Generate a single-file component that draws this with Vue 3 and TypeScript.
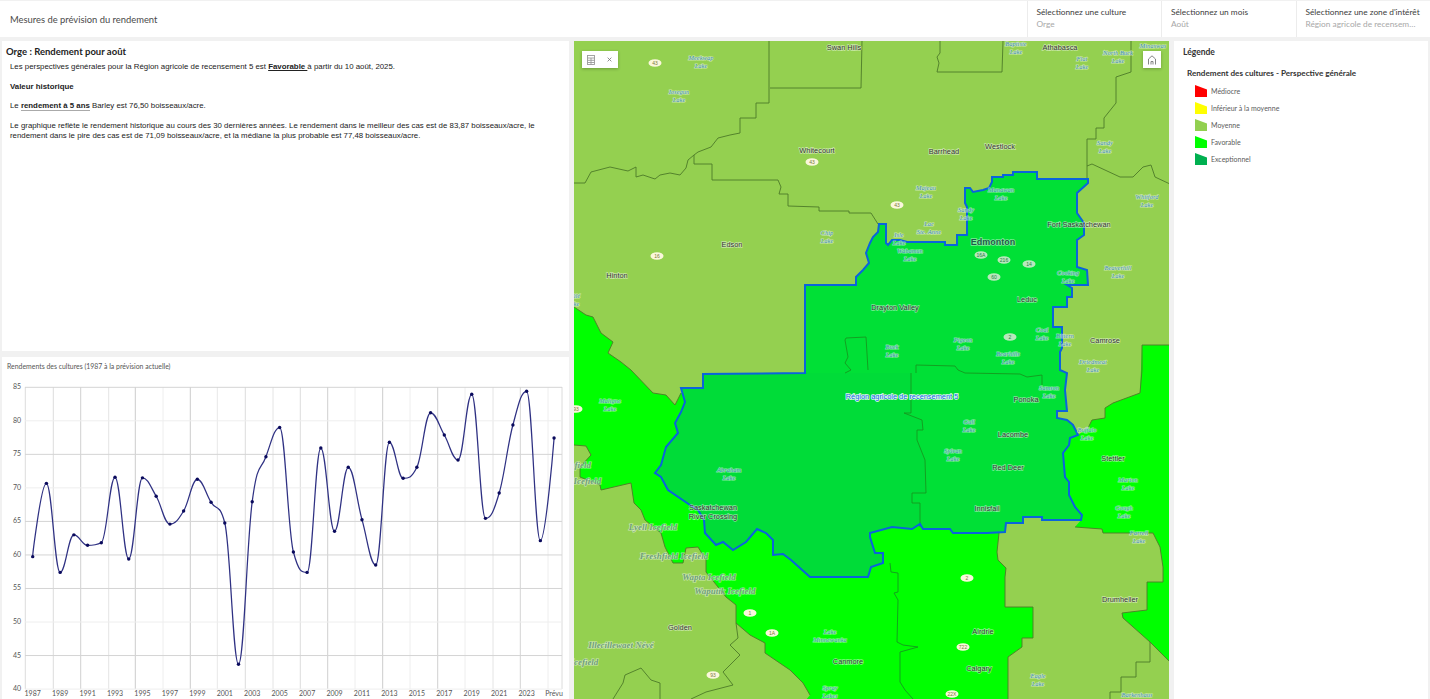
<script setup lang="ts">
import { computed } from 'vue'

const selectors = [
  { label: 'Sélectionnez une culture', value: 'Orge' },
  { label: 'Sélectionnez un mois', value: 'Août' },
  { label: "Sélectionnez une zone d'intérêt", value: 'Région agricole de recensem…' }
]

const legendItems = [
  { label: 'Médiocre', color: '#ff0000' },
  { label: 'Inférieur à la moyenne', color: '#ffff00' },
  { label: 'Moyenne', color: '#92d050' },
  { label: 'Favorable', color: '#00ff00' },
  { label: 'Exceptionnel', color: '#00b050' }
]

const yields = [
  59.75, 70.68, 57.4, 63, 61.44, 61.83, 71.58, 59.4, 71.5, 68.75, 64.6, 66.55, 71.28,
  67.85, 64.76, 43.7, 67.94, 74.65, 79, 60.44, 57.4, 75.95, 63.53, 73.07, 65.26, 58.5,
  76.8, 71.43, 73.07, 81.2, 77.89, 74.16, 83.96, 65.46, 69.24, 79.38, 84.4, 62.13, 77.44
]
const yOf = (v: number) => 30.3 + (85 - v) * 6.706
const xOf = (i: number) => 30.7 + i * 13.72
const points = yields.map((v, i) => ({ x: xOf(i), y: yOf(v) }))

// same spline the chart library draws: control points never overshoot a neighbour
const controls = (i: number) => {
  const p = points[i]
  const a = points[i - 1]
  const b = points[i + 1]
  if (!a || !b) return { lx: p.x, ly: p.y, rx: p.x, ry: p.y }
  const lx = (1.5 * p.x + a.x) / 2.5
  const rx = (1.5 * p.x + b.x) / 2.5
  let ly = (1.5 * p.y + a.y) / 2.5
  let ry = (1.5 * p.y + b.y) / 2.5
  const fix = ((ry - ly) * (rx - p.x)) / (rx - lx) + p.y - ry
  ly += fix
  ry += fix
  if (ly > a.y && ly > p.y) {
    ly = Math.max(a.y, p.y)
    ry = 2 * p.y - ly
  } else if (ly < a.y && ly < p.y) {
    ly = Math.min(a.y, p.y)
    ry = 2 * p.y - ly
  }
  if (ry > b.y && ry > p.y) {
    ry = Math.max(b.y, p.y)
    ly = 2 * p.y - ry
  } else if (ry < b.y && ry < p.y) {
    ry = Math.min(b.y, p.y)
    ly = 2 * p.y - ry
  }
  return { lx, ly, rx, ry }
}

const linePath = computed(() => {
  let d = `M${points[0].x} ${points[0].y}`
  for (let i = 1; i < points.length; i++) {
    const c1 = controls(i - 1)
    const c2 = controls(i)
    d += `C${c1.rx.toFixed(1)} ${c1.ry.toFixed(1)} ${c2.lx.toFixed(1)} ${c2.ly.toFixed(1)} ${points[i].x.toFixed(1)} ${points[i].y.toFixed(1)}`
  }
  return d
})

const hLines = [85, 80, 75, 70, 65, 60, 55, 50, 45, 40].map((v, i) => ({
  v,
  y: yOf(v),
  major: i % 2 === 0 || v === 65 || v === 60
}))
const vLines = [
  { x: 23.3, c: '#dcdcdc' }, { x: 51.3, c: '#dcdcdc' }, { x: 78.7, c: '#d0d0d0' }, { x: 106.7, c: '#e4e4e4' },
  { x: 133.3, c: '#cccccc' }, { x: 161, c: '#eeeeee' }, { x: 188.3, c: '#cccccc' }, { x: 215.3, c: '#e8e8e8' },
  { x: 243.3, c: '#dcdcdc' }, { x: 271, c: '#e4e4e4' }, { x: 298.3, c: '#dcdcdc' }, { x: 325.7, c: '#cfcfcf' },
  { x: 353, c: '#eeeeee' }, { x: 380.7, c: '#cccccc' }, { x: 408, c: '#eeeeee' }, { x: 435.7, c: '#d0d0d0' },
  { x: 463, c: '#eeeeee' }, { x: 491, c: '#e4e4e4' }, { x: 518.3, c: '#d4d4d4' }, { x: 546, c: '#eeeeee' },
  { x: 560, c: '#dcdcdc' }
]
const xLabels = [
  '1987', '1989', '1991', '1993', '1995', '1997', '1999', '2001', '2003', '2005', '2007',
  '2009', '2011', '2013', '2015', '2017', '2019', '2021', '2023', 'Prévu'
]

// map geometry is in page pixels, the svg viewBox starts at the map's corner
const favWest =
  '574,307 586,315 593,317 601,333 613,342 608,353 621,362 631,370 653,393 666,395 675,405 681,393 720,400 900,450 999,533 997,552 998,560 1006,568 1005,577 1005,607 1033,607 1033,638 1022,638 1022,647 1008,657 1008,700 806,700 810,695 803,683 790,670 765,653 765,643 750,635 736,623 736,605 726,597 706,572 706,560 698,547 686,548 683,563 673,563 665,547 661,533 645,520 641,510 634,503 631,483 601,490 600,485 580,477 580,467 591,455 586,446 574,445'
const favEast =
  '1142,345 1170,345 1170,662 1150,642 1123,618 1122,613 1147,610 1147,582 1163,582 1163,567 1160,547 1153,533 1103,533 1102,529 1075,527 1081,520 1050,500 1050,440 1078,435 1088,428 1092,420 1105,418 1105,408 1113,403 1140,393'
const region =
  '1088,179 1037,179 1037,172 1013,172 1013,175 1003,175 1003,177 992,177 992,182 989,188 983,190 973,192 970,188 965,188 965,203 967,207 967,235 957,235 957,245 945,245 945,242 907,242 900,240 892,240 888,245 886,243 886,224 879,224 878,232 873,237 870,243 866,253 869,263 863,270 856,277 856,285 805,285 805,373 703,374 703,388 681,388 685,402 681,412 675,423 678,433 666,447 661,465 655,473 661,477 668,490 690,505 698,510 704,520 705,533 716,545 723,542 733,550 746,542 757,529 766,533 773,540 773,555 783,554 791,560 810,577 868,577 871,567 883,563 883,553 875,553 870,537 870,533 892,527 912,529 920,524 923,529 950,529 953,533 987,533 1005,532 1006,523 1023,523 1023,517 1042,517 1042,520 1081,520 1082,515 1075,507 1069,495 1069,482 1065,477 1063,453 1069,445 1070,438 1078,435 1073,425 1067,420 1057,418 1057,411 1067,411 1065,390 1067,373 1060,370 1060,352 1062,348 1062,327 1053,327 1053,307 1067,307 1067,297 1072,297 1072,288 1067,285 1088,285 1087,270 1077,267 1077,240 1084,235 1084,223 1077,213 1077,193 1088,183'
const regionWest = '640,373 911,373 911,413 904,413 922,420 923,430 917,430 917,440 925,460 926,493 912,493 912,503 920,503 920,600 640,600'

const oliveLines = [
  '769,41 769,103 756,103 756,118 740,118 740,133 730,135 718,138 711,147 698,152 694,155 688,160 686,168 680,175 670,173 660,175 655,179 643,175 636,177 636,167 628,171 610,167 591,172 585,183 574,183',
  '694,155 694,164 712,164 712,180 778,180 781,187 779,194 788,194 788,206 819,207 819,211 849,211 849,213 871,213 878,224',
  '770,88 861,88 862,41',
  '940,41 940,53 937,57 939,63 937,72 1002,72 1003,41',
  '1131,41 1131,72 1116,77 1116,103 1104,118 1104,128 1096,128 1096,139 1087,139 1087,179',
  '1087,166 1092,164 1120,177 1133,177 1143,167 1151,165 1155,177 1170,184',
  '574,307 586,315 593,317 601,333 613,342 608,353 621,362 631,370 653,393 666,395 675,405 681,393',
  '574,445 586,446 591,455 580,467 580,477 600,485 601,490 631,483 634,503 641,510 645,520 661,533 665,547 673,563 683,563 686,548 698,547 706,560 706,572 726,597 736,605 736,623 750,635 765,643 765,653 790,670 803,683 810,695',
  '613,699 623,683 625,675 641,668 651,680 660,683 660,699',
  '691,699 706,692 733,685 723,672 740,655 730,645 738,638 736,623',
  '1150,642 1150,662 1136,662 1136,677 1121,677 1121,692 1110,692 1110,699',
  '1142,345 1142,370 1140,393 1113,403 1105,408 1105,418 1092,420 1088,428',
  '1075,527 1102,529 1103,533 1153,533 1160,547 1163,567 1163,582 1147,582 1147,610 1122,613 1123,618 1150,642 1170,662',
  '999,533 997,552 998,560 1006,568 1005,577 1005,607 1033,607 1033,638 1022,638 1022,647 1008,657 1008,699',
  '1142,345 1170,345'
]
const innerLines = [
  '916,373 916,365 955,366 958,370 965,373 1020,374 1027,377 1042,375 1042,385',
  '845,373 851,370 845,363 848,357 845,340 846,338 866,337 868,370',
  '911,373 911,413 904,413 922,420 923,430 917,430 917,440 925,460 926,493 912,493 912,503 920,503 920,527',
  '890,563 891,572 898,573 898,592 894,593 898,600 897,642 903,645 918,647 900,652 900,682 905,690 913,699'
]

const cities = [
  { t: 'Swan Hills', x: 844, y: 47 }, { t: 'Athabasca', x: 1060, y: 47 }, { t: 'Whitecourt', x: 817, y: 150 },
  { t: 'Barrhead', x: 944, y: 151 }, { t: 'Westlock', x: 1000, y: 146 }, { t: 'Edson', x: 732, y: 244 },
  { t: 'Hinton', x: 617, y: 275 }, { t: 'Fort Saskatchewan', x: 1079, y: 224 }, { t: 'Leduc', x: 1027, y: 299 },
  { t: 'Drayton Valley', x: 895, y: 307 }, { t: 'Camrose', x: 1105, y: 340 }, { t: 'Ponoka', x: 1026, y: 399 },
  { t: 'Lacombe', x: 1013, y: 434 }, { t: 'Red Deer', x: 1008, y: 467 }, { t: 'Innisfail', x: 987, y: 508 },
  { t: 'Stettler', x: 1113, y: 458 }, { t: 'Drumheller', x: 1120, y: 599 }, { t: 'Airdrie', x: 983, y: 631 },
  { t: 'Calgary', x: 979, y: 668 }, { t: 'Canmore', x: 848, y: 661 }, { t: 'Golden', x: 680, y: 627 },
  { t: 'Saskatchewan', x: 713, y: 507 }, { t: 'River Crossing', x: 713, y: 516 }
]
const lakes = [
  { a: 'Meekwap', b: 'Lake', x: 701, y: 58 }, { a: 'Iosegun', b: 'Lake', x: 679, y: 92 },
  { a: 'Chip', b: 'Lake', x: 827, y: 233 }, { a: 'Baptiste', b: 'Lake', x: 1016, y: 44 },
  { a: 'Flat', b: 'Lake', x: 1082, y: 59 }, { a: 'North Buck', b: 'Lake', x: 1118, y: 53 },
  { a: 'Minaswas', b: '', x: 1153, y: 46 }, { a: 'Sandy', b: 'Lake', x: 1105, y: 143 },
  { a: 'Whitford', b: 'Lake', x: 1147, y: 197 }, { a: 'Majeau', b: 'Lake', x: 926, y: 188 },
  { a: 'Lac', b: 'Ste. Anne', x: 929, y: 224 }, { a: 'Isle', b: 'Lake', x: 899, y: 235 },
  { a: 'Wabamun', b: 'Lake', x: 910, y: 251 }, { a: 'Sandy', b: 'Lake', x: 966, y: 210 },
  { a: 'Manawan', b: 'Lake', x: 1001, y: 190 }, { a: 'Cooking', b: 'Lake', x: 1068, y: 273 },
  { a: 'Beaverhill', b: 'Lake', x: 1118, y: 268 }, { a: 'Pigeon', b: 'Lake', x: 963, y: 340 },
  { a: 'Buck', b: 'Lake', x: 892, y: 347 }, { a: 'Coal', b: 'Lake', x: 1042, y: 330 },
  { a: 'Bittern', b: 'Lake', x: 1065, y: 336 }, { a: 'Bearhills', b: 'Lake', x: 1008, y: 354 },
  { a: 'Driedmeat', b: 'Lake', x: 1093, y: 362 }, { a: 'Buffalo', b: 'Lake', x: 1087, y: 430 },
  { a: 'Samson', b: 'Lake', x: 1049, y: 388 }, { a: 'Gull', b: 'Lake', x: 969, y: 422 },
  { a: 'Sylvan', b: 'Lake', x: 953, y: 451 }, { a: 'Marion', b: 'Lake', x: 1128, y: 480 },
  { a: 'Gough', b: 'Lake', x: 1124, y: 508 }, { a: 'Farrell', b: 'Lake', x: 1139, y: 533 },
  { a: 'Eagle', b: 'Lake', x: 1038, y: 676 }, { a: 'Barkenhaus', b: '', x: 1137, y: 695 },
  { a: 'Abraham', b: 'Lake', x: 729, y: 470 }, { a: 'Maligne', b: 'Lake', x: 610, y: 401 },
  { a: 'Lake', b: 'Minnewanka', x: 830, y: 632 }, { a: 'Spray', b: 'Lakes', x: 830, y: 688 },
  { a: 'Brûlé', b: 'Lake', x: 573, y: 296 }
]
const icefields = [
  { t: 'Lyell Icefield', x: 653, y: 527 }, { t: 'Freshfield Icefield', x: 674, y: 556 },
  { t: 'Wapta Icefield', x: 709, y: 577 }, { t: 'Waputik Icefield', x: 725, y: 591 },
  { t: 'Illecillewaet Névé', x: 621, y: 645 }, { t: 'Clemenceau Icefield', x: 553, y: 465 },
  { t: 'Columbia Icefield', x: 568, y: 481 }, { t: 'Durrand Icefield', x: 567, y: 662 }
]
const shields = [
  { t: '43', x: 655, y: 63 }, { t: '43', x: 812, y: 162 }, { t: '43', x: 897, y: 205 },
  { t: '16', x: 657, y: 256 }, { t: '16A', x: 981, y: 255, dim: true }, { t: '216', x: 1004, y: 260, dim: true },
  { t: '14', x: 1029, y: 264, dim: true }, { t: '60', x: 994, y: 277, dim: true }, { t: '2', x: 1010, y: 337, dim: true },
  { t: '93', x: 576, y: 409 }, { t: '1', x: 750, y: 613 }, { t: '1A', x: 772, y: 633 }, { t: '93', x: 713, y: 675 },
  { t: '2', x: 967, y: 578 }, { t: '722', x: 963, y: 647 }, { t: '22X', x: 952, y: 694 }
]
</script>

<template>
  <div class="page">
    <header class="top-bar">
      <div class="app-title">Mesures de prévision du rendement</div>
      <div class="selectors">
        <div v-for="s in selectors" :key="s.label" class="selector">
          <div class="selector-label">{{ s.label }}</div>
          <div class="selector-value">{{ s.value }}</div>
        </div>
      </div>
    </header>

    <main class="content">
      <section class="left-col">
        <div class="text-panel">
          <h2>Orge : Rendement pour août</h2>
          <div class="body-text">
            <p>Les perspectives générales pour la Région agricole de recensement 5 est <b class="under">Favorable </b>à partir du 10 août, 2025.</p>
            <p><b>Valeur historique</b></p>
            <p>Le <b class="under-light">rendement à 5 ans</b> Barley est 76,50 boisseaux/acre.</p>
            <p>Le graphique reflète le rendement historique au cours des 30 dernières années. Le rendement dans le meilleur des cas est de 83,87 boisseaux/acre, le rendement dans le pire des cas est de 71,09 boisseaux/acre, et la médiane la plus probable est 77,48 boisseaux/acre.</p>
          </div>
        </div>
        <div class="chart-panel">
          <div class="chart-title">Rendements des cultures (1987 à la prévision actuelle)</div>
          <svg class="chart" viewBox="0 0 567 342" width="567" height="342">
            <line v-for="l in vLines" :key="l.x" :x1="l.x" :x2="l.x" y1="30" y2="332" :stroke="l.c" stroke-width="1" />
            <line v-for="l in hLines" :key="l.v" x1="23" x2="560" :y1="l.y" :y2="l.y" :stroke="l.major ? '#d4d4d4' : '#eeeeee'" stroke-width="1" />
            <text v-for="l in hLines" :key="'y' + l.v" class="tick" x="19" :y="l.y + 2" text-anchor="end">{{ l.v }}</text>
            <text v-for="(t, i) in xLabels" :key="t" class="tick" :x="xOf(i * 2)" y="339" text-anchor="middle">{{ t }}</text>
            <path :d="linePath" fill="none" stroke="#2f3183" stroke-width="1.25" />
            <circle v-for="(p, i) in points" :key="i" :cx="p.x" :cy="p.y" r="1.7" fill="#0a0a5c" />
          </svg>
        </div>
      </section>

      <section class="map-panel">
        <svg class="map" viewBox="574 41 595 658" width="595" height="658">
          <defs>
            <clipPath id="region-clip"><polygon :points="region" /></clipPath>
          </defs>
          <rect x="574" y="41" width="595" height="659" fill="#94d050" />
          <polygon :points="favWest" fill="#00ff00" />
          <polygon :points="favEast" fill="#00ff00" />
          <polygon :points="region" fill="#00e036" />
          <polygon :points="regionWest" fill="#00dc38" clip-path="url(#region-clip)" />
          <polyline v-for="(l, i) in oliveLines" :key="'o' + i" :points="l" class="boundary" />
          <polyline v-for="(l, i) in innerLines" :key="'n' + i" :points="l" class="boundary inner" />
          <polygon :points="region" class="region-line" />

          <g v-for="(s, i) in shields" :key="'s' + i" :class="{ dim: s.dim }">
            <ellipse :cx="s.x" :cy="s.y" rx="6.5" ry="3.8" class="shield" />
            <text :x="s.x" :y="s.y + 1.8" class="shield-text" text-anchor="middle">{{ s.t }}</text>
          </g>
          <g v-for="(l, i) in lakes" :key="'l' + i" class="lake">
            <text :x="l.x" :y="l.y + 2" text-anchor="middle">{{ l.a }}</text>
            <text v-if="l.b" :x="l.x" :y="l.y + 10" text-anchor="middle">{{ l.b }}</text>
          </g>
          <text v-for="f in icefields" :key="f.t" :x="f.x" :y="f.y + 3" class="icefield" text-anchor="middle">{{ f.t }}</text>
          <text v-for="c in cities" :key="c.t" :x="c.x" :y="c.y + 2.5" class="city" text-anchor="middle">{{ c.t }}</text>
          <text x="993" y="245" class="city capital" text-anchor="middle">Edmonton</text>
          <text x="902" y="398.5" class="region-label" text-anchor="middle">Région agricole de recensement 5</text>
        </svg>

        <div class="map-tools">
          <button class="tool" type="button" aria-label="Table">
            <svg viewBox="0 0 12 12" width="12" height="12" fill="none" stroke="#9a9a9a" stroke-width="0.9">
              <rect x="2.5" y="1.5" width="7" height="9" />
              <path d="M2.5 4h7M2.5 6.3h7M2.5 8.5h7M6 4v6.5" />
            </svg>
          </button>
          <button class="tool" type="button" aria-label="Fermer">
            <svg viewBox="0 0 12 12" width="9" height="9" fill="none" stroke="#777" stroke-width="1.1">
              <path d="M3.5 3.5l5 5M8.5 3.5l-5 5" />
            </svg>
          </button>
        </div>
        <button class="home" type="button" aria-label="Accueil">
          <svg viewBox="0 0 12 12" width="12" height="12" fill="none" stroke="#777" stroke-width="0.9">
            <path d="M2.5 10.5V5L6 1.8 9.5 5v5.5M5 10.5V7.5h2v3" />
          </svg>
        </button>
      </section>

      <aside class="legend-panel">
        <h3>Légende</h3>
        <div class="legend-title">Rendement des cultures - Perspective générale</div>
        <ul class="legend-list">
          <li v-for="item in legendItems" :key="item.label">
            <svg viewBox="0 0 12 12" width="12" height="12"><polygon points="0,0 12,4.5 12,12 0,12" :fill="item.color" /></svg>
            <span>{{ item.label }}</span>
          </li>
        </ul>
      </aside>
    </main>
  </div>
</template>

<style>
html, body {
  margin: 0;
  background: #f1f1f1;
}
</style>

<style scoped>
.page {
  width: 1430px;
  height: 699px;
  overflow: hidden;
  padding-top: 1px;
  box-sizing: border-box;
  background: #f1f1f1;
  font-family: Lato, "Noto Sans", sans-serif;
}
.top-bar {
  height: 36px;
  background: #fff;
  display: flex;
  justify-content: space-between;
  align-items: center;
}
.app-title {
  margin-left: 10px;
  font-size: 9.4px;
  color: #4a4a4a;
}
.selectors {
  display: flex;
  height: 100%;
}
.selector {
  box-sizing: border-box;
  width: 134.5px;
  padding: 6px 0 0 9px;
  border-left: 1px solid #ececec;
  white-space: nowrap;
}
.selector-label {
  font-size: 8.3px;
  line-height: 11px;
  color: #3c3c3c;
}
.selector-value {
  font-size: 8.3px;
  line-height: 12px;
  color: #a8a8a8;
}
.content {
  display: flex;
  gap: 5px;
  margin-top: 4px;
  padding-left: 2px;
  height: 658px;
}
.left-col {
  width: 567px;
  display: flex;
  flex-direction: column;
  gap: 6px;
}
.text-panel {
  height: 310px;
  background: #fff;
  box-sizing: border-box;
  padding: 5px 4px;
}
.text-panel h2 {
  margin: 0;
  font-size: 9.5px;
  line-height: 11px;
  font-weight: 700;
  color: #222;
}
.body-text {
  margin: 5px 0 0 4px;
  font-family: "Liberation Sans", Arial, sans-serif;
  font-size: 7.85px;
  line-height: 10px;
  color: #222;
}
.body-text p {
  margin: 0 0 9.6px;
}
.under {
  text-decoration: underline;
}
.under-light {
  border-bottom: 1px solid #aaa;
}
.chart-panel {
  position: relative;
  flex: 1;
  background: #fff;
  overflow: hidden;
}
.chart-title {
  position: absolute;
  left: 5px;
  top: 4px;
  font-size: 6.9px;
  line-height: 10px;
  color: #555;
}
.chart {
  display: block;
}
.tick {
  font-family: Lato, sans-serif;
  font-size: 7px;
  fill: #555;
}
.map-panel {
  position: relative;
  width: 595px;
  height: 658px;
  overflow: hidden;
}
.map {
  display: block;
}
.boundary {
  fill: none;
  stroke: #4d7a28;
  stroke-width: 0.9;
}
.boundary.inner {
  stroke: #15991f;
}
.region-line {
  fill: none;
  stroke: #0a64dc;
  stroke-width: 2;
}
.shield {
  fill: #fbf7dc;
}
.dim .shield {
  fill: #b8e8bc;
}
.shield-text {
  font-family: "Liberation Sans", sans-serif;
  font-size: 5px;
  fill: #7a7a3a;
}
.dim .shield-text {
  fill: #2a7a4a;
}
.lake text {
  font-family: "Liberation Serif", serif;
  font-style: italic;
  font-size: 6.5px;
  fill: #3c8cb8;
  stroke: rgba(255, 255, 255, 0.5);
  stroke-width: 1.2px;
  paint-order: stroke;
}
.icefield {
  font-family: "Liberation Serif", serif;
  font-style: italic;
  font-weight: 700;
  font-size: 9px;
  fill: #6f9f78;
  stroke: rgba(255, 255, 255, 0.55);
  stroke-width: 1.2px;
  paint-order: stroke;
}
.city {
  font-family: "Liberation Sans", sans-serif;
  font-size: 7.4px;
  fill: #333;
  stroke: rgba(255, 255, 255, 0.5);
  stroke-width: 1.3px;
  paint-order: stroke;
}
.capital {
  font-size: 9px;
  font-weight: 700;
  fill: #1f5a4a;
}
.region-label {
  font-family: "Liberation Sans", sans-serif;
  font-size: 7.4px;
  fill: #0a64e8;
  stroke: rgba(255, 255, 255, 0.9);
  stroke-width: 1.5px;
  paint-order: stroke;
}
.map-tools {
  position: absolute;
  left: 8px;
  top: 10px;
  display: flex;
  background: #fff;
  box-shadow: 0 1px 3px rgba(0, 0, 0, 0.25);
}
.tool,
.home {
  width: 18px;
  height: 17px;
  padding: 0;
  border: 0;
  background: #fff;
  display: flex;
  align-items: center;
  justify-content: center;
}
.home {
  position: absolute;
  right: 8px;
  top: 10px;
  box-shadow: 0 1px 3px rgba(0, 0, 0, 0.25);
}
.legend-panel {
  width: 254px;
  height: 658px;
  background: #fff;
  box-sizing: border-box;
  padding: 6px 9px;
}
.legend-panel h3 {
  margin: 0;
  font-size: 8.5px;
  line-height: 11px;
  font-weight: 700;
  color: #333;
}
.legend-title {
  margin: 10px 0 0 4px;
  font-size: 8.15px;
  line-height: 11px;
  font-weight: 700;
  color: #333;
}
.legend-list {
  list-style: none;
  margin: 4px 0 0 12px;
  padding: 0;
}
.legend-list li {
  display: flex;
  align-items: center;
  gap: 4px;
  height: 16.8px;
  font-size: 7px;
  color: #5a5a5a;
}
</style>
